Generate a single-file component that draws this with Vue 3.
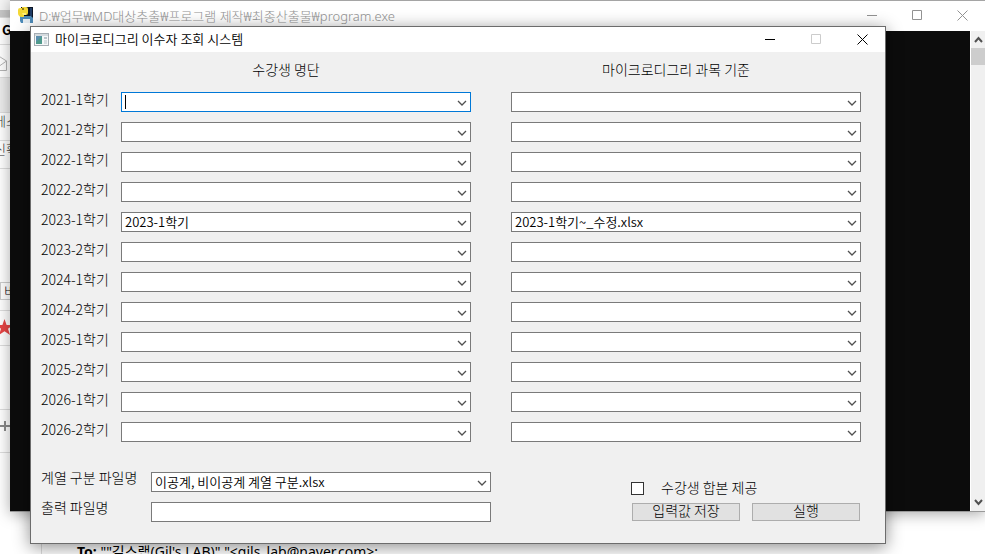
<script setup>
import { reactive, ref } from 'vue'

const terms = [
  '2021-1학기', '2021-2학기', '2022-1학기', '2022-2학기',
  '2023-1학기', '2023-2학기', '2024-1학기', '2024-2학기',
  '2025-1학기', '2025-2학기', '2026-1학기', '2026-2학기'
]

const rows = reactive(terms.map((term) => ({
  term,
  roster: term === '2023-1학기' ? '2023-1학기' : '',
  criteria: term === '2023-1학기' ? '2023-1학기~_수정.xlsx' : ''
})))

const division = ref('이공계, 비이공계 계열 구분.xlsx')
const output = ref('')
const merged = ref(false)
</script>

<template>
  <div class="desktop">
    <div class="mail">
      <aside class="rail">
        <div class="cell toolbar"></div>
        <div class="cell brand">G</div>
        <div class="cell letter">
          <svg width="8" height="18" viewBox="0 0 8 18" fill="none" stroke="#b4b4b4"><path d="M-12 7 L-3 1 L6.500 7 V16.500 H-12 M6.500 7 L-2 13" /></svg>
        </div>
        <div class="cell shade"></div>
        <div class="cell line">메스</div>
        <div class="cell line">신확</div>
        <div class="cell blank"></div>
        <div class="cell chip">비</div>
        <div class="cell rule"></div>
        <div class="cell star">
          <svg width="13" height="18" viewBox="0 0 13 18"><path d="M4.500 1 L6.600 7 H13 L8 10.800 L10 17 L4.500 13.300 L-1 17 L1 10.800 L-4 7 H2.400 Z" fill="#e64545" /></svg>
        </div>
        <div class="cell gap"></div>
        <div class="cell plus">
          <svg width="10" height="10" viewBox="0 0 10 10"><path d="M5 0 V10 M0 5 H10" stroke="#8a8a8a" stroke-width="2" /></svg>
        </div>
      </aside>
      <p class="recipient"><b>To:</b> ""길스랩(Gil's LAB)" "&lt;gils_lab@naver.com&gt;;</p>
    </div>

    <section class="console">
      <header class="console-bar">
        <svg class="console-icon" width="16" height="16" viewBox="0 0 16 16">
          <rect x="3" y="0" width="12" height="11" fill="#0c1524" />
          <rect x="12" y="1" width="2" height="8" fill="#1f3c66" />
          <path d="M2 9 H13 L15 11 V16 H3 L2 14 Z" fill="#4d8bb9" />
          <rect x="5" y="12" width="7" height="4" fill="#e6edf2" />
          <path d="M0 3 Q0 1 2 1 H4 V0 H8 Q10 0 10 2 V6 Q10 8 8 8 H6 V10 H3 Q0 9 0 6 Z" fill="#f4d836" />
          <path d="M4 6 H8 V8 H5 Z" fill="#fff07a" />
          <circle cx="5" cy="2" r="1" fill="#6b5b10" />
        </svg>
        <span class="console-title">D:₩업무₩MD대상추출₩프로그램 제작₩최종산출물₩program.exe</span>
        <div class="window-buttons console-buttons">
          <button aria-label="최소화"><svg width="11" height="11" viewBox="0 0 11 11"><path d="M0 5.500 H10" /></svg></button>
          <button aria-label="최대화"><svg width="11" height="11" viewBox="0 0 11 11"><path d="M.5 .5 H9.500 V9.500 H.5 Z" /></svg></button>
          <button aria-label="닫기"><svg width="11" height="11" viewBox="0 0 11 11"><path d="M.5 .5 L10.500 10.500 M10.500 .5 L.5 10.500" /></svg></button>
        </div>
      </header>
      <div class="console-body">
        <div class="screen"></div>
        <div class="scrollbar">
          <svg width="9" height="17" viewBox="0 0 9 17"><path d="M1 11 L4.500 7 L8 11" /></svg>
          <div class="thumb"></div>
          <div class="track"></div>
          <svg width="9" height="17" viewBox="0 0 9 17"><path d="M1 6 L4.500 10 L8 6" /></svg>
        </div>
      </div>
    </section>

    <main class="dialog">
      <header class="title-bar">
        <svg width="15" height="13" viewBox="0 0 15 13">
          <rect x=".5" y=".5" width="14" height="12" fill="#f5f7f8" stroke="#a5adb3" />
          <rect x="1" y="1" width="13" height="2" fill="#d4dade" />
          <rect x="2" y="3" width="6" height="8" fill="#4f9a8c" />
          <path d="M2 3 H8 L2 9 Z" fill="#5b8fae" />
          <rect x="10" y="4" width="3" height="2" fill="#b9c4ca" />
          <rect x="10" y="7" width="3" height="4" fill="#d5dde1" />
        </svg>
        <h1>마이크로디그리 이수자 조회 시스템</h1>
        <div class="window-buttons">
          <button aria-label="최소화"><svg width="11" height="11" viewBox="0 0 11 11"><path d="M0 5.500 H10" /></svg></button>
          <button aria-label="최대화" disabled><svg width="11" height="11" viewBox="0 0 11 11"><path d="M.5 .5 H9.500 V9.500 H.5 Z" /></svg></button>
          <button aria-label="닫기"><svg width="11" height="11" viewBox="0 0 11 11"><path d="M.5 .5 L10.500 10.500 M10.500 .5 L.5 10.500" /></svg></button>
        </div>
      </header>

      <form class="form" @submit.prevent>
        <div class="row headings">
          <span></span>
          <h2 id="roster-heading">수강생 명단</h2>
          <h2 id="criteria-heading">마이크로디그리 과목 기준</h2>
        </div>
        <div class="rows">
          <div v-for="(row, i) in rows" :key="row.term" class="row">
            <label :for="`roster-${i}`">{{ row.term }}</label>
            <div class="combo" :class="{ active: i === 0 }">
              <select :id="`roster-${i}`" v-model="row.roster">
                <option :value="row.roster">{{ row.roster }}</option>
              </select>
              <span v-if="i === 0" class="caret"></span>
              <svg width="10" height="7" viewBox="0 0 10 7"><path d="M1 1 L5 5 L9 1" /></svg>
            </div>
            <div class="combo">
              <select :id="`criteria-${i}`" v-model="row.criteria" aria-labelledby="criteria-heading">
                <option :value="row.criteria">{{ row.criteria }}</option>
              </select>
              <svg width="10" height="7" viewBox="0 0 10 7"><path d="M1 1 L5 5 L9 1" /></svg>
            </div>
          </div>
        </div>

        <div class="bottom">
          <div class="files">
            <label for="division">계열 구분 파일명</label>
            <div class="combo">
              <select id="division" v-model="division">
                <option :value="division">{{ division }}</option>
              </select>
              <svg width="10" height="7" viewBox="0 0 10 7"><path d="M1 1 L5 5 L9 1" /></svg>
            </div>
            <label for="output">출력 파일명</label>
            <input id="output" v-model="output" class="field" type="text" />
          </div>
          <div class="actions">
            <label class="check"><input v-model="merged" type="checkbox" /><span>수강생 합본 제공</span></label>
            <div class="buttons">
              <button type="button">입력값 저장</button>
              <button type="submit">실행</button>
            </div>
          </div>
        </div>
      </form>
    </main>
  </div>
</template>

<style>
body {
  margin: 0;
}
</style>

<style scoped>
* {
  box-sizing: border-box;
}

.desktop {
  position: relative;
  min-height: 100vh;
  overflow: hidden;
  background: #fff;
  color: #000;
  font-family: "Noto Sans CJK KR", sans-serif;
  font-size: 14px;
  font-weight: 300;
}

/* Mail page behind the windows */
.mail {
  position: absolute;
  inset: 0;
  display: flex;
  align-items: stretch;
}

.rail {
  width: 42px;
  border-right: 1px solid #ddd;
}

.cell {
  width: 30px;
  border-bottom: 1px solid #ddd;
  line-height: 20px;
  font-size: 13px;
  white-space: nowrap;
}

.toolbar {
  height: 18px;
  background: linear-gradient(#f5f5f5 10px, #c8c8c8 10px);
}

.brand {
  padding-left: 2px;
  height: 27px;
  line-height: 24px;
  font-weight: 700;
}

.letter {
  height: 33px;
  padding-top: 9px;
}

.shade {
  height: 35px;
  background: #ececec;
}

.line {
  height: 28px;
  line-height: 16px;
  text-indent: -6px;
  color: #333;
}

.blank {
  height: 113px;
  border: 0;
}

.chip {
  height: 18px;
  border: 1px solid #ccc;
  padding-left: 3px;
  line-height: 16px;
}

.rule {
  height: 11px;
}

.star {
  height: 35px;
  padding-top: 7px;
}

.gap {
  height: 64px;
}

.plus {
  height: 43px;
  padding-top: 11px;
}

.plus svg,
.star svg,
.letter svg {
  display: block;
}

.recipient {
  align-self: flex-end;
  margin: 0;
  padding-left: 35px;
  height: 12px;
  line-height: 20px;
  font-family: "Noto Sans", "Noto Sans CJK KR", sans-serif;
  font-size: 14px;
  font-weight: 400;
  white-space: nowrap;
}

.recipient b {
  font-weight: 700;
}

/* Console window */
.console {
  position: absolute;
  top: 0;
  left: 10px;
  right: 0;
  border-top: 1px solid #a5a5a5;
  border-bottom: 1px solid #999;
  background: #fff;
  box-shadow: 0 2px 14px rgba(0, 0, 0, 0.35);
}

.console-bar {
  display: flex;
  align-items: center;
  height: 30px;
  padding: 0 0 2px 8px;
  color: #929292;
}

.console-title {
  flex: 1;
  margin-left: 5px;
  white-space: nowrap;
  font-family: "Noto Sans", "Noto Sans CJK KR", sans-serif;
  font-size: 13px;
  font-weight: 300;
}

.window-buttons {
  display: flex;
  align-items: center;
}

.window-buttons button {
  display: flex;
  align-items: center;
  justify-content: center;
  width: 46px;
  height: 25px;
  padding: 0;
  border: 0;
  background: none;
  color: inherit;
}

.window-buttons button:disabled {
  color: #ccc;
}

.window-buttons svg {
  fill: none;
  stroke: currentColor;
}

.window-buttons.console-buttons button {
  width: 45px;
}

.console-body {
  display: flex;
  height: 480px;
}

.screen {
  flex: 1;
  background: #0c0c0c;
}

.scrollbar {
  display: flex;
  flex-direction: column;
  align-items: center;
  width: 15px;
  border-left: 1px solid #fff;
  background: #f0f0f0;
}

.scrollbar svg {
  fill: none;
  stroke: #505050;
  stroke-width: 2;
}

.thumb {
  align-self: stretch;
  height: 17px;
  background: #cdcdcd;
}

.track {
  flex: 1;
}

/* Dialog window */
.dialog {
  position: absolute;
  top: 26px;
  left: 30px;
  right: 99px;
  border: 1px solid #6c6c6c;
  background: #f0f0f0;
  box-shadow: 0 3px 16px rgba(0, 0, 0, 0.45);
}

.title-bar {
  display: flex;
  align-items: center;
  height: 25px;
  padding-left: 3px;
  background: #fff;
}

h1 {
  flex: 1;
  margin: 0 0 0 6px;
  padding-bottom: 2px;
  font-size: 13px;
  font-weight: 350;
  line-height: 20px;
  white-space: nowrap;
}

.form {
  padding: 7px 24px 21px 10px;
}

.row {
  display: grid;
  grid-template-columns: 80px 1fr 1fr;
  align-items: start;
}

.row .combo + .combo,
.row h2 + h2 {
  margin-left: 20px;
}

.row .combo:nth-child(2),
.row h2:nth-child(2) {
  margin-right: 20px;
}

.headings {
  margin-bottom: 13px;
}

h2 {
  margin: 0;
  padding-right: 20px;
  text-align: center;
  font-size: 14px;
  font-weight: 300;
  line-height: 20px;
}

.rows {
  display: grid;
  gap: 10px;
}

label {
  line-height: 14px;
  white-space: nowrap;
}

.combo {
  position: relative;
  height: 20px;
}

select,
.field {
  display: block;
  width: 100%;
  height: 20px;
  margin: 0;
  padding: 0 20px 0 3px;
  border: 1px solid #7a7a7a;
  border-radius: 0;
  outline: 0;
  background: #fff;
  color: #000;
  font-family: "Noto Sans CJK KR", sans-serif;
  font-size: 13px;
  font-weight: 350;
  line-height: 18px;
  appearance: none;
}

.active select {
  border-color: #0078d7;
}

.combo svg {
  position: absolute;
  top: 8px;
  right: 4px;
  fill: none;
  stroke: #505050;
  stroke-width: 1.3;
  pointer-events: none;
}

.caret {
  position: absolute;
  top: 3px;
  left: 4px;
  width: 1px;
  height: 14px;
  background: #000;
}

.bottom {
  display: flex;
  justify-content: space-between;
  margin-top: 26px;
}

.files {
  display: grid;
  grid-template-columns: 110px 340px;
  align-items: start;
  row-gap: 6px;
}

.files .combo,
.files .field {
  margin-top: 4px;
}

.files label {
  line-height: 20px;
  margin-top: -1px;
}

.actions {
  padding: 12px 1px 0 0;
}

.check {
  display: flex;
  align-items: center;
  height: 16px;
}

.check span {
  padding-bottom: 2px;
}

.check input {
  width: 13px;
  height: 13px;
  margin: 0 17px 0 -1px;
  border: 1px solid #333;
  background: #fff;
  appearance: none;
}

.check input:checked {
  background: #0078d7;
}

.buttons {
  display: grid;
  grid-template-columns: 108px 108px;
  gap: 12px;
  margin-top: 7px;
}

.buttons button {
  height: 18px;
  padding: 0 0 3px;
  border: 1px solid #adadad;
  background: #e1e1e1;
  color: #000;
  font: inherit;
  line-height: 13px;
}
</style>
